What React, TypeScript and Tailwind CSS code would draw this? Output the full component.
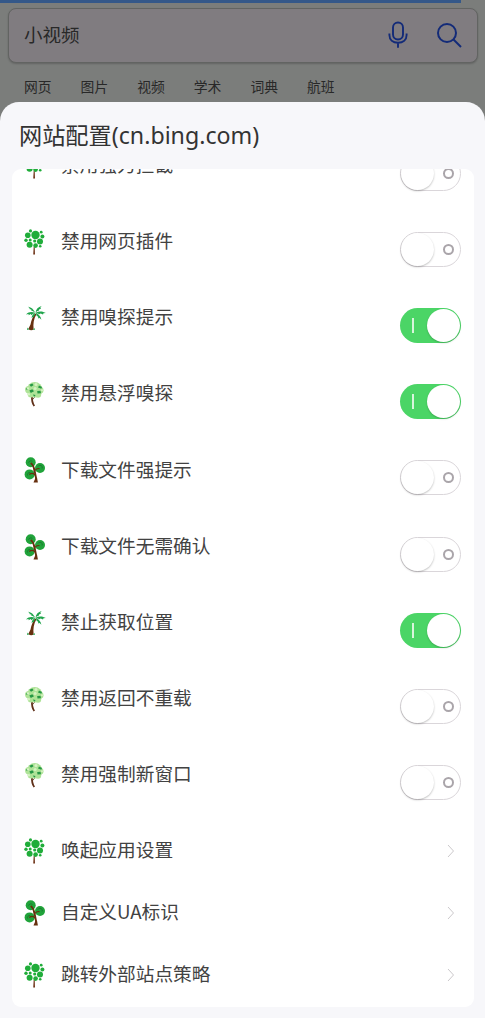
type TreeKind = "bubbles" | "palm" | "leafy" | "branch";

const rows: { label: string; tree: TreeKind; on?: boolean; link?: boolean }[] = [
  { label: "禁用强力拦截", tree: "bubbles", on: false },
  { label: "禁用网页插件", tree: "bubbles", on: false },
  { label: "禁用嗅探提示", tree: "palm", on: true },
  { label: "禁用悬浮嗅探", tree: "leafy", on: true },
  { label: "下载文件强提示", tree: "branch", on: false },
  { label: "下载文件无需确认", tree: "branch", on: false },
  { label: "禁止获取位置", tree: "palm", on: true },
  { label: "禁用返回不重载", tree: "leafy", on: false },
  { label: "禁用强制新窗口", tree: "leafy", on: false },
  { label: "唤起应用设置", tree: "bubbles", link: true },
  { label: "自定义UA标识", tree: "branch", link: true },
  { label: "跳转外部站点策略", tree: "bubbles", link: true },
];

const tabs = ["网页", "图片", "视频", "学术", "词典", "航班"];

function BubbleTree() {
  return (
    <>
      <path d="M9.7 17.5 L9.2 25.5 H11 L10.7 17.5Z" fill="#70351a" />
      <g fill="#20ad3a">
        <circle cx="11.5" cy="6" r="4.2" />
        <circle cx="3.8" cy="6.2" r="2.8" />
        <circle cx="16" cy="12.5" r="3" />
        <circle cx="5.6" cy="15.8" r="3" />
        <circle cx="11.6" cy="16.6" r="2.3" />
        <circle cx="6.5" cy="1.9" r="1.6" />
        <circle cx="17.2" cy="3.2" r="1.4" />
        <circle cx="18.4" cy="7.6" r="2" />
        <circle cx="2" cy="11.2" r="1.7" />
        <circle cx="6.2" cy="10.9" r="1.5" />
        <circle cx="10.7" cy="12" r="1.6" />
        <circle cx="16.2" cy="17.3" r="1.3" />
      </g>
    </>
  );
}

function PalmTree() {
  return (
    <>
      <path d="M11 8.5 C8.6 12 7.3 15.5 6.5 19.5 L4.3 24 C6 25.5 8.4 25.5 9.6 24.3 C9 19 9.7 13.5 12.4 9.2Z" fill="#67300f" />
      <path d="M3 25 L3.5 22.5 L5 24.5Z M9 25 L10.5 22.8 L10.8 25Z" fill="#20a54c" />
      <g fill="#20a54c">
        <path d="M11.5 8 C9.3 4 7.5 2.2 4 1.7 L5.8 3.2 L5.2 4 L7.3 4.6 L7.2 5.6 L9 6.2Z" />
        <path d="M11.5 8.3 C8 6.2 5 6.6 2 9.4 L4.5 8.9 L4.7 10.2 L6.7 9 L7.6 10.2 L9 8.8Z" />
        <path d="M11.5 7.8 C12 4 14.2 2 17.7 1.1 L16.3 2.8 L17 3.7 L15 4.4 L15 5.6 L13 6.2Z" />
        <path d="M11.6 7.8 C15 5.8 18.7 6 21.8 8 L19.5 8.2 L19 9.4 L16.7 8.4 L15.2 9.2 L13.5 8.2Z" />
        <path d="M11.8 7.8 C14.5 9 16.8 11.3 17.4 14.8 L15.6 13.1 L14.3 13.4 L14 11.5 L12.7 11Z" />
        <path d="M11.3 8 C9.2 8.8 7.9 10.4 7.5 13 L9 12 L10 12 L10.4 10.4Z" />
      </g>
    </>
  );
}

function LeafyTree() {
  return (
    <>
      <path d="M8 15 C7.7 19.5 8.4 22.5 10.3 25" fill="none" stroke="#603019" strokeWidth="1.8" />
      <path d="M8.4 18.8 L10.8 16" stroke="#603019" strokeWidth=".8" />
      <g fill="#aee397">
        <circle cx="10.7" cy="8.8" r="7.8" />
        <circle cx="4.8" cy="8.7" r="3.7" />
        <circle cx="16.2" cy="9.2" r="3.3" />
        <circle cx="7" cy="13.3" r="3.3" />
        <circle cx="14" cy="13.5" r="3.2" />
      </g>
      <g fill="#269845">
        <path d="M5.3 3.7 L8.4 2.6 L9.5 4.2 L7 5.8Z" />
        <path d="M15 4.5 L18 6 L17.3 7.8 L14 6.5Z" />
        <path d="M5.3 9.4 L8.3 8.3 L10 10.2 L6.8 12Z" />
        <path d="M13.2 10 L16.5 9.8 L17 12.2 L13.5 12.4Z" />
        <path d="M8.8 13.6 L11.6 14 L10.3 15.7Z" />
        <path d="M1.6 7.9 L3.2 7 L3.5 8.9Z" />
      </g>
      <g fill="#d6f2c4">
        <circle cx="12" cy="3.4" r="1.5" />
        <circle cx="4" cy="7.4" r="1.1" />
        <circle cx="11.1" cy="7.4" r="1.5" />
        <circle cx="4.8" cy="13.2" r="1.2" />
        <circle cx="18" cy="9.2" r="1" />
      </g>
    </>
  );
}

function BranchTree() {
  return (
    <>
      <g fill="#20a33a">
        <circle cx="6.7" cy="5.2" r="5" />
        <circle cx="16" cy="11" r="5" />
        <circle cx="5.6" cy="17.4" r="5" />
      </g>
      <path d="M6.7 6 C9.3 7.5 9.8 10 10.4 13.5 C11.2 17 12.6 20 12 25" fill="none" stroke="#67300f" strokeWidth="1.9" />
      <path d="M5.3 17.5 C7.8 15.7 10 16.5 11.4 18.3 M10.6 14.5 C11.2 12 13.4 11 15.6 11.8" fill="none" stroke="#67300f" strokeWidth="1.2" />
      <path d="M11.2 21.5 L9.5 25.5 H13.9 L13 20.5Z" fill="#67300f" />
      <path d="M4.6 5.7 A2.3 2.3 0 0 1 8.5 4.6 M13.9 9.6 A2.3 2.3 0 0 1 18.1 11.5 M3.6 18.6 A2.3 2.3 0 0 1 6.2 15.5" fill="none" stroke="#176c2d" strokeWidth=".7" />
    </>
  );
}

function Tree({ kind }: { kind: TreeKind }) {
  return (
    <svg viewBox="0 0 22 26" className="h-[26px] w-[22px] shrink-0">
      {kind === "bubbles" && <BubbleTree />}
      {kind === "palm" && <PalmTree />}
      {kind === "leafy" && <LeafyTree />}
      {kind === "branch" && <BranchTree />}
    </svg>
  );
}

function Toggle({ on }: { on?: boolean }) {
  if (on) {
    return (
      <div className="mt-[22px] flex h-[35px] w-[61px] items-center justify-between rounded-full bg-[#4bd566] pr-px pl-3">
        <div className="h-[15px] w-[1.5px] bg-[#d8f5dc]" />
        <div className="size-[33px] rounded-full bg-white shadow-[0_1px_2px_rgba(0,0,0,0.2)]" />
      </div>
    );
  }
  return (
    <div className="mt-[22px] flex h-[35px] w-[61px] items-center justify-between rounded-full border border-[#dad6da] bg-white pr-1.5">
      <div className="size-[33px] rounded-full bg-white shadow-[0_1px_2px_rgba(0,0,0,0.25)]" />
      <div className="size-[11px] rounded-full border-2 border-[#aaa5aa]" />
    </div>
  );
}

export default function App() {
  return (
    <div className="flex h-[1021px] w-[485px] flex-col overflow-hidden bg-white font-['Noto_Sans_CJK_SC',sans-serif]">
      {/* Dimmed page behind the sheet */}
      <div className="h-[122px] shrink-0 bg-[#7b7d7b]">
        <div className="h-[3px] w-[461px] bg-[#345889]" />
        <div className="mt-[5px] ml-2 flex h-[55px] w-[470px] items-center rounded-lg border border-[#626462] bg-[#807c80] pr-[15px] pl-[15px] shadow-[0_1px_2px_rgba(0,0,0,0.2)]">
          <span className="mb-0.5 flex-1 text-[18.5px] leading-none text-[#282828]">小视频</span>
          <svg viewBox="0 0 20 28" className="mr-[28px] mb-0.5 h-7 w-5" fill="none" stroke="#132b78" strokeWidth="1.9">
            <rect x="5" y="1.5" width="10" height="17" rx="5" />
            <path d="M1.4 12.5 V14 C1.4 19 5 21.7 10 21.7 S18.6 19 18.6 14 V12.5 M10 21.7 V26.7" />
          </svg>
          <svg viewBox="0 0 26 26" className="mb-0.5 h-[26px] w-[26px]" fill="none" stroke="#132b78" strokeWidth="2">
            <circle cx="11" cy="11" r="9" />
            <path d="M17.5 17.5 L25 25" />
          </svg>
        </div>
        <div className="mt-4 flex gap-[29.1px] pl-6 text-[13.8px] leading-[14px] text-[#282828]">
          {tabs.map((tab) => (
            <span key={tab} className="w-[27.5px] whitespace-nowrap">
              {tab}
            </span>
          ))}
        </div>
      </div>

      {/* Bottom sheet */}
      <div className="relative -mt-5 flex h-[916px] shrink-0 flex-col rounded-t-[19px] bg-[#f7f7fa] px-3">
        <h1 className="h-[67px] pt-[15px] pl-[7px] text-[23.2px] leading-[34px] font-normal whitespace-nowrap text-[#333]">
          网站配置<span className="font-['Noto_Sans',sans-serif]">(cn.bing.com)</span>
        </h1>
        <div className="h-[838px] w-[462px] overflow-hidden rounded-[9px] bg-white">
          <div className="-mt-[35.2px]">
            {rows.map((row) => (
              <div key={row.label} className={row.link ? "flex h-[62px] justify-between pr-[13px] pl-3" : "flex h-[76.15px] justify-between pr-[13px] pl-3"}>
                <div className="flex h-[61px] items-center">
                  <div className="mt-[3px]">
                    <Tree kind={row.tree} />
                  </div>
                  <span className="ml-[15px] text-[18.7px] leading-none whitespace-nowrap text-[#424242]">{row.label}</span>
                </div>
                {row.link ? (
                  <svg viewBox="0 0 8 14" className="mt-[25px] mr-1.5 h-[14px] w-2" fill="none" stroke="#cbc8cb" strokeWidth="1">
                    <path d="M1 1 L6.5 7 L1 13" />
                  </svg>
                ) : (
                  <Toggle on={row.on} />
                )}
              </div>
            ))}
          </div>
        </div>
      </div>
    </div>
  );
}
